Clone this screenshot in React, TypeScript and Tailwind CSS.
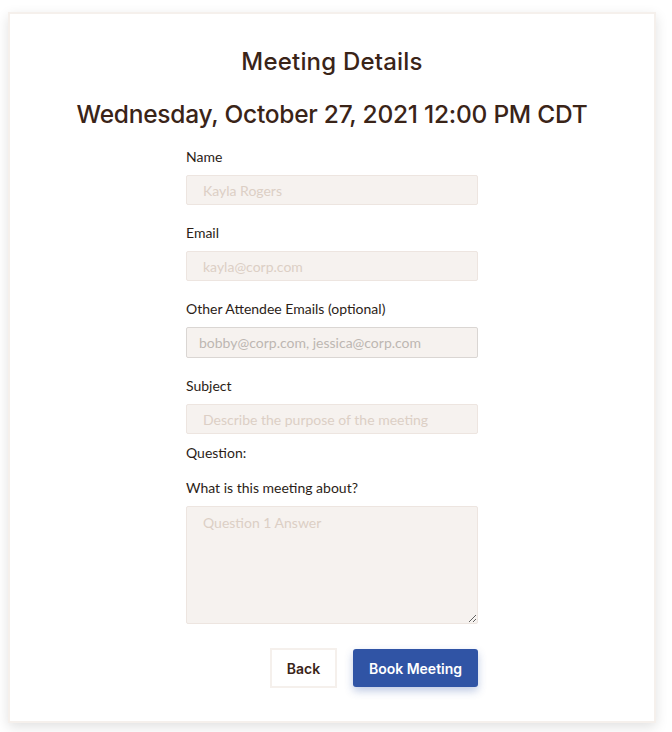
export default function App() {
  const label = "block text-[14px] leading-5 text-[#2b1d17]";
  const input =
    "block w-full h-[30px] rounded-[2px] border border-[#ede5e0] bg-[#f6f2ef] px-4 text-[14px] text-[#3a2418] placeholder:text-[#dccfc5] outline-none";

  return (
    <div className="min-h-screen bg-white px-2 pt-3 pb-[10px]" style={{ fontFamily: "Lato, 'Open Sans', sans-serif" }}>
      <div className="w-[648px] h-[711px] border-2 border-[#f5f0ec] bg-white shadow-[0_4px_12px_rgba(0,0,0,0.12)]">
        {/* Header */}
        <div className="pt-[32px] text-center text-[#3a2418] font-['Inter',sans-serif]">
          <h1 className="text-[24px] leading-8 font-medium tracking-[0.2px]">Meeting Details</h1>
          <h2 className="mt-[20px] text-[24.5px] leading-8 font-medium tracking-[-0.25px]">
            Wednesday, October 27, 2021 12:00 PM CDT
          </h2>
        </div>

        {/* Form */}
        <form className="mx-auto mt-[17px] w-[292px]" onSubmit={(e) => e.preventDefault()}>
          <label className={label}>Name</label>
          <input className={`${input} mt-2`} placeholder="Kayla Rogers" />

          <label className={`${label} mt-[18px]`}>Email</label>
          <input className={`${input} mt-2`} placeholder="kayla@corp.com" />

          <label className={`${label} mt-[18px]`}>Other Attendee Emails (optional)</label>
          <input
            className="mt-2 block w-full h-[31px] rounded-[2px] border border-[#dad6d3] bg-[#f6f2ef] px-3 text-[14px] placeholder:text-[#bdb7b2] outline-none"
            placeholder="bobby@corp.com, jessica@corp.com"
          />

          <label className={`${label} mt-[18px]`}>Subject</label>
          <input className={`${input} mt-2`} placeholder="Describe the purpose of the meeting" />

          <p className={`${label} mt-[9px]`}>Question:</p>
          <label className={`${label} mt-[15px]`}>What is this meeting about?</label>
          <textarea
            className="mt-2 block w-full h-[118px] rounded-[2px] border border-[#ede5e0] bg-[#f6f2ef] px-4 py-[5px] text-[14px] placeholder:text-[#dccfc5] outline-none"
            placeholder="Question 1 Answer"
          />

          <div className="mt-6 flex justify-end gap-4 font-['Inter',sans-serif]">
            <button
              type="button"
              className="h-10 w-[67px] border-2 border-[#f5f0ec] bg-white text-[14px] font-semibold text-[#3a2418]"
            >
              Back
            </button>
            <button
              type="submit"
              className="h-[38px] mt-px w-[125px] rounded-[3px] bg-[#3054a5] text-[14px] font-semibold text-white shadow-[0_4px_8px_rgba(48,84,165,0.3)]"
            >
              Book Meeting
            </button>
          </div>
        </form>
      </div>
    </div>
  );
}
